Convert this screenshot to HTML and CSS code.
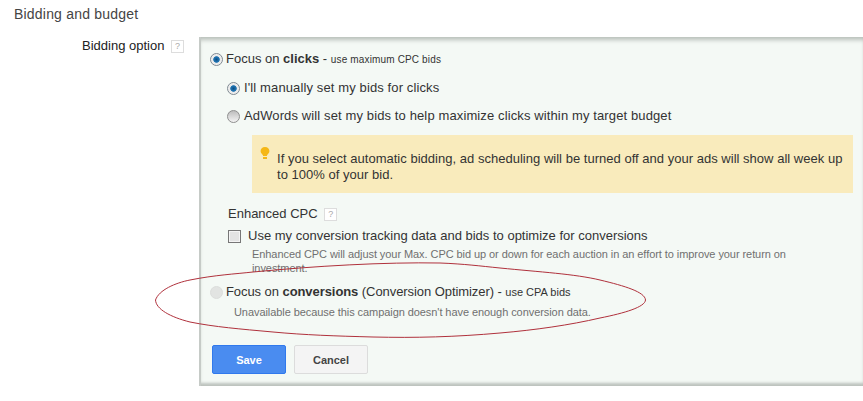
FILE: index.html
```html
<!DOCTYPE html>
<html>
<head>
  <title>Bidding and budget</title>
  <link rel="stylesheet" href="styles.css">
</head>
<body>

<h2 class="section-title">Bidding and budget</h2>

<div class="section">
  <div class="field-label">
    Bidding option <span class="help">?</span>
  </div>

  <div class="panel">
    <div class="option top-option">
      <span class="radio checked"></span>
      <span>Focus on <b>clicks</b> - <small>use maximum CPC bids</small></span>
    </div>

    <div class="sub-options">
      <div class="option wide-option manual-option">
        <span class="radio checked"></span>
        <span>I'll manually set my bids for clicks</span>
      </div>
      <div class="option wide-option auto-option">
        <span class="radio"></span>
        <span>AdWords will set my bids to help maximize clicks within my target budget</span>
      </div>

      <div class="notice">
        <svg class="bulb" width="10" height="13" viewBox="0 0 10 13">
          <path d="M5 0C2.200 0 .6 1.900.6 4c0 1.700 1 2.600 1.800 3.500.5.600.7 1 .7 1.500h3.800c0-.5.2-.9.7-1.500C8.400 6.600 9.400 5.700 9.400 4 9.400 1.900 7.800 0 5 0z" fill="#f5b716"/>
          <rect x="3" y="10" width="4" height="2" fill="#f5b716"/>
        </svg>
        <p>If you select automatic bidding, ad scheduling will be turned off and your ads will show all week up to 100% of your bid.</p>
      </div>

      <div class="enhanced-title">Enhanced CPC <span class="help">?</span></div>
      <div class="option check-option">
        <span class="checkbox"></span>
        <span>Use my conversion tracking data and bids to optimize for conversions</span>
      </div>
      <p class="hint enhanced-hint">Enhanced CPC will adjust your Max. CPC bid up or down for each auction in an effort to improve your return on investment.</p>
    </div>

    <div class="option conversions-option">
      <span class="radio disabled"></span>
      <span>Focus on <b>conversions</b> (Conversion Optimizer) - <small>use CPA bids</small></span>
    </div>
    <p class="hint unavailable">Unavailable because this campaign doesn't have enough conversion data.</p>

    <div class="buttons">
      <button class="btn btn-save">Save</button>
      <button class="btn btn-cancel">Cancel</button>
    </div>
  </div>
</div>

<!-- hand drawn ring on top of the form -->
<svg class="ring" width="492" height="78" viewBox="0 0 492 78">
  <path d="M.5 38C4 28 20 21 35 18 60 13 80 12 98 10 160 4 230 0 285 1 310 2 325 4 345 6 385 10 420 12 445 18 470 24 490 30 490.500 38 490 45 470 51 445 56 415 63 380 68 345 71 300 75 260 76 218 75 180 74 150 73 118 70 85 67 60 65 35 60 15 55 1 47 .5 38z" fill="none" stroke="#b0313c" stroke-width="1"/>
</svg>

</body>
</html>
```

FILE: styles.css
```css
html, body {
  margin: 0;
  padding: 0;
  overflow: hidden;
}
body {
  position: relative;
  width: 863px;
  height: 401px;
  background-color: #fff;
  font-family: "Liberation Sans", Arial, sans-serif;
  font-size: 13px;
  color: #333;
}
.section-title {
  margin: 0;
  padding: 6px 0 0 14px;
  height: 37px;
  box-sizing: border-box;
  font-size: 14px;
  line-height: 16px;
  font-weight: normal;
  letter-spacing: .2px;
  color: #444;
}
.section {
  display: flex;
}
.field-label {
  width: 199px;
  flex-shrink: 0;
  box-sizing: border-box;
  padding: 1px 15px 0 82px;
  line-height: 15px;
  color: #222;
  white-space: nowrap;
}
.help {
  display: inline-block;
  width: 11px;
  height: 11px;
  margin-left: 3px;
  border: 1px solid #ddd;
  background-color: #fff;
  font-size: 9px;
  line-height: 11px;
  text-align: center;
  color: #aaa;
  vertical-align: 1px;
}
.panel {
  flex: 1;
  height: 349px;
  box-sizing: border-box;
  padding: 14px 0 0 9px;
  background-color: #f4f9f5;
  border-left: 2px solid #c6cbc7;
  box-shadow: inset 0 5px 4px -2px #b9bfba, inset 0 -5px 3px -2px #bcc2bd;
}
.option {
  display: flex;
  align-items: center;
  gap: 3px;
  line-height: 16px;
  white-space: nowrap;
}
.option small {
  font-size: 10px;
  letter-spacing: .15px;
}
.radio {
  width: 11px;
  height: 11px;
  flex-shrink: 0;
  border: 1px solid #8f8f8f;
  border-radius: 50%;
  background: linear-gradient(#bdbdbd, #f4f4f4);
}
.radio.checked {
  background: radial-gradient(closest-side, #0b4f86 0, #2277b5 52%, #e8e8e8 66%, #f2f2f2 100%);
  border-color: #808a92;
}
.radio.disabled {
  border-color: #dcdedc;
  background: #e2e4e2;
}
.checkbox {
  width: 11px;
  height: 11px;
  flex-shrink: 0;
  border: 1px solid #777;
  background-color: #e3e3e3;
  box-shadow: inset 0 0 0 1px #f4f4f4;
}
.sub-options {
  padding-left: 17px;
}
.wide-option {
  gap: 4px;
  letter-spacing: .12px;
}
.manual-option {
  margin-top: 12px;
}
.auto-option {
  margin-top: 12px;
}
.notice {
  display: flex;
  width: 601px;
  height: 58px;
  box-sizing: border-box;
  margin: 11px 0 0 25px;
  padding: 12px 0 0 8px;
  background-color: #f9ebbc;
}
.bulb {
  flex-shrink: 0;
  margin-right: 7px;
}
.notice p {
  margin: 4px 0 0 0;
  line-height: 16px;
  width: 580px;
  letter-spacing: .02px;
}
.enhanced-title {
  margin: 13px 0 0 1px;
  line-height: 15px;
}
.check-option {
  margin: 7px 0 0 1px;
  gap: 7px;
}
.hint {
  margin: 0;
  font-size: 11px;
  letter-spacing: -.07px;
  color: #707070;
}
.enhanced-hint {
  width: 590px;
  margin: 3px 0 0 25px;
  line-height: 14px;
}
.conversions-option {
  margin-top: 9px;
  letter-spacing: -.07px;
}
.conversions-option small {
  font-size: 11px;
  letter-spacing: 0;
}
.unavailable {
  margin: 5px 0 0 24px;
  line-height: 14px;
}
.buttons {
  display: flex;
  gap: 8px;
  margin: 26px 0 0 2px;
}
.btn {
  width: 74px;
  height: 29px;
  border-radius: 2px;
  font-family: "Liberation Sans", Arial, sans-serif;
  font-size: 11px;
  font-weight: bold;
  cursor: pointer;
}
.btn-save {
  border: 1px solid #3079ed;
  background-color: #4a8cf0;
  color: #fff;
}
.btn-cancel {
  border: 1px solid #dcdcdc;
  background-color: #f4f4f4;
  color: #444;
}
.ring {
  position: absolute;
  left: 155px;
  top: 262px;
}
```
